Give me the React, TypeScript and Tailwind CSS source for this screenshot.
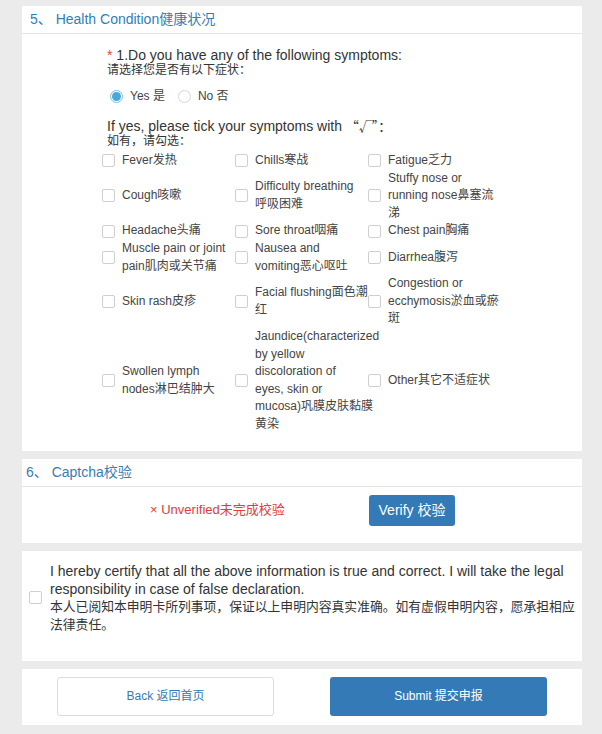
import React from 'react';

const FONT = "font-['Liberation_Sans','Noto_Sans_CJK_SC',sans-serif]";

// line breaks follow the original rendering of each label
const SYMPTOMS = [
  'Fever发热',
  'Chills寒战',
  'Fatigue乏力',
  'Cough咳嗽',
  'Difficulty breathing\n呼吸困难',
  'Stuffy nose or\nrunning nose鼻塞流\n涕',
  'Headache头痛',
  'Sore throat咽痛',
  'Chest pain胸痛',
  'Muscle pain or joint\npain肌肉或关节痛',
  'Nausea and\nvomiting恶心呕吐',
  'Diarrhea腹泻',
  'Skin rash皮疹',
  'Facial flushing面色潮\n红',
  'Congestion or\necchymosis淤血或瘀\n斑',
  'Swollen lymph\nnodes淋巴结肿大',
  'Jaundice(characterized\nby yellow\ndiscoloration of\neyes, skin or\nmucosa)巩膜皮肤黏膜\n黄染',
  'Other其它不适症状',
];

function Box() {
  return <span className="h-[13px] w-[13px] shrink-0 rounded-[2px] border border-[#cfcfcf] bg-white" />;
}

function Radio({ checked, label }: { checked?: boolean; label: string }) {
  return (
    <label className="flex items-center gap-[7px]">
      {checked ? (
        <span className="flex h-[13px] w-[13px] items-center justify-center rounded-full border border-[#7cc0e0] bg-white">
          <span className="h-[9px] w-[9px] rounded-full bg-[#4aa8d6]" />
        </span>
      ) : (
        <span className="h-[13px] w-[13px] rounded-full border border-[#d6d6d6] bg-white" />
      )}
      <span>{label}</span>
    </label>
  );
}

export default function App() {
  return (
    <div className={`min-h-[734px] bg-[#ebebeb] pt-[6px] pb-[9px] text-[#333] ${FONT}`}>
      <div className="ml-[22px] flex w-[560px] flex-col gap-[8px]">
        {/* 5. health */}
        <section className="bg-white">
          <div className="flex h-[28px] items-center border-b border-[#e4e4e4] px-[8px] text-[14px] text-[#2f80b6]">
            5、 Health Condition健康状况
          </div>
          <div className="pl-[80px] pt-[14px] pb-[17px]">
            <div className="pl-[5px] leading-[15px]">
              <p className="text-[14px]">
                <span className="text-[#e64545]">*</span> 1.Do you have any of the following symptoms:
              </p>
              <p className="text-[12px]">请选择您是否有以下症状：</p>
              <div className="mt-[9px] flex h-[18px] items-center gap-[13px] pl-[3px] text-[12px] text-[#444]">
                <Radio checked label="Yes 是" />
                <Radio label="No 否" />
              </div>
              <p className="mt-[14px] h-[15px] text-[14px]">
                If yes, please tick your symptoms with{' '}
                <span className="font-['Noto_Sans_CJK_SC',sans-serif] text-[13px] leading-[10px]">“√”：</span>
              </p>
              <p className="text-[12px]">如有，请勾选：</p>
            </div>
            <div className="mt-[3px] grid grid-cols-[133px_133px_133px] text-[12px] leading-[17.6px] text-[#444]">
              {SYMPTOMS.map((s) => (
                <div key={s} className="flex items-center gap-[7px]">
                  <Box />
                  <span className="whitespace-pre">{s}</span>
                </div>
              ))}
            </div>
          </div>
        </section>

        {/* 6. captcha */}
        <section className="bg-white">
          <div className="flex h-[28px] items-center border-b border-[#e4e4e4] px-[4px] text-[14px] text-[#3b7cb0]">
            6、 Captcha校验
          </div>
          <div className="flex items-center pt-[8px] pb-[17px]">
            <div className="w-[347px] pl-[128px] text-[13px] text-[#e23b3b]">× Unverified未完成校验</div>
            <button className="h-[31px] w-[86px] rounded-[3px] bg-[#337ab7] text-[14px] text-white">
              Verify 校验
            </button>
          </div>
        </section>

        {/* declaration */}
        <section className="flex items-center gap-[8px] bg-white pl-[7px] pt-[11px] pb-[27px]">
          <Box />
          <div className="leading-[18px] text-[#333]">
            <p className="text-[14px]">
              I hereby certify that all the above information is true and correct. I will take the legal responsibility in case of false declaration.
            </p>
            <p className="whitespace-pre text-[12.8px]">
              {'本人已阅知本申明卡所列事项，保证以上申明内容真实准确。如有虚假申明内容，愿承担相应\n法律责任。'}
            </p>
          </div>
        </section>

        {/* actions */}
        <section className="flex justify-between bg-white px-[35px] pt-[8px] pb-[9px]">
          <button className="h-[39px] w-[217px] rounded-[3px] border border-[#dcdcdc] bg-white text-[12px] text-[#337ab7]">
            Back 返回首页
          </button>
          <button className="h-[39px] w-[217px] rounded-[3px] bg-[#337ab7] text-[12px] text-white">
            Submit 提交申报
          </button>
        </section>
      </div>
    </div>
  );
}
